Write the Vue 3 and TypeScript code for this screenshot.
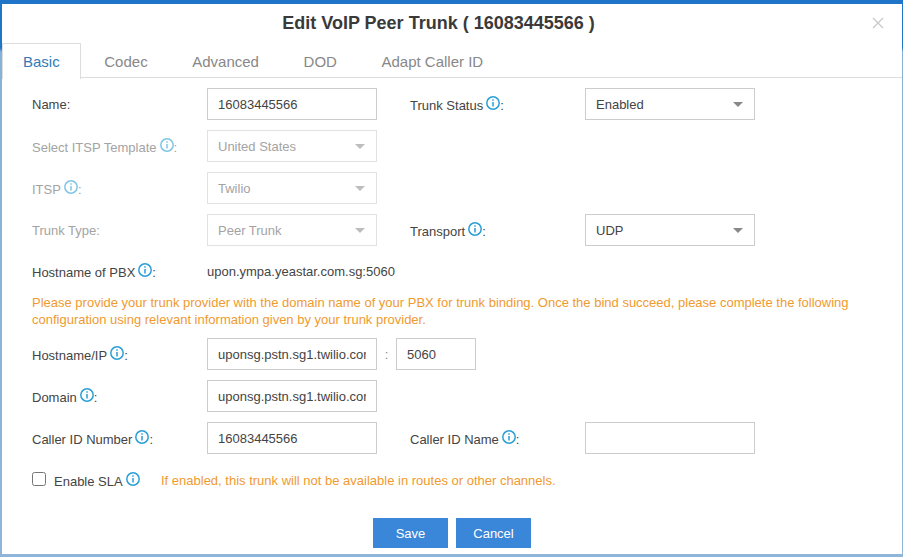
<script setup lang="ts">
const tabs = ['Basic', 'Codec', 'Advanced', 'DOD', 'Adapt Caller ID']
</script>

<template>
  <div class="backdrop">
    <div class="modal">
      <header class="modal-head">
        <h1>Edit VoIP Peer Trunk ( 16083445566 )</h1>
        <svg class="close" width="12" height="12" viewBox="0 0 12 12">
          <path d="M1 1l10 10M11 1L1 11" stroke="#c8c8c8" stroke-width="1.3" fill="none" />
        </svg>
      </header>

      <nav class="tabs">
        <a v-for="(tab, i) in tabs" :key="tab" class="tab" :class="{ active: i === 0 }">{{ tab }}</a>
      </nav>

      <form class="form" @submit.prevent>
        <div class="row">
          <label class="label">Name:</label>
          <input class="field" value="16083445566" />
          <label class="label right">Trunk Status<svg class="info" viewBox="0 0 14 14"><circle cx="7" cy="7" r="6.2" /><path d="M7 6v4.6M7 3.2v1.6" /></svg>:</label>
          <div class="field select">Enabled<i class="arrow" /></div>
        </div>

        <div class="row muted">
          <label class="label">Select ITSP Template<svg class="info" viewBox="0 0 14 14"><circle cx="7" cy="7" r="6.2" /><path d="M7 6v4.6M7 3.2v1.6" /></svg>:</label>
          <div class="field select">United States<i class="arrow" /></div>
        </div>

        <div class="row muted">
          <label class="label">ITSP<svg class="info" viewBox="0 0 14 14"><circle cx="7" cy="7" r="6.2" /><path d="M7 6v4.6M7 3.2v1.6" /></svg>:</label>
          <div class="field select">Twilio<i class="arrow" /></div>
        </div>

        <div class="row">
          <label class="label muted">Trunk Type:</label>
          <div class="field select muted">Peer Trunk<i class="arrow" /></div>
          <label class="label right">Transport<svg class="info" viewBox="0 0 14 14"><circle cx="7" cy="7" r="6.2" /><path d="M7 6v4.6M7 3.2v1.6" /></svg>:</label>
          <div class="field select">UDP<i class="arrow" /></div>
        </div>

        <div class="row static">
          <label class="label">Hostname of PBX<svg class="info" viewBox="0 0 14 14"><circle cx="7" cy="7" r="6.2" /><path d="M7 6v4.6M7 3.2v1.6" /></svg>:</label>
          <span class="plain">upon.ympa.yeastar.com.sg:5060</span>
        </div>

        <p class="warning notice">Please provide your trunk provider with the domain name of your PBX for trunk binding. Once the bind succeed, please complete the following configuration using relevant information given by your trunk provider.</p>

        <div class="row">
          <label class="label">Hostname/IP<svg class="info" viewBox="0 0 14 14"><circle cx="7" cy="7" r="6.2" /><path d="M7 6v4.6M7 3.2v1.6" /></svg>:</label>
          <input class="field" value="uponsg.pstn.sg1.twilio.com" />
          <span class="colon">:</span>
          <input class="field port" value="5060" />
        </div>

        <div class="row">
          <label class="label">Domain<svg class="info" viewBox="0 0 14 14"><circle cx="7" cy="7" r="6.2" /><path d="M7 6v4.6M7 3.2v1.6" /></svg>:</label>
          <input class="field" value="uponsg.pstn.sg1.twilio.com" />
        </div>

        <div class="row">
          <label class="label">Caller ID Number<svg class="info" viewBox="0 0 14 14"><circle cx="7" cy="7" r="6.2" /><path d="M7 6v4.6M7 3.2v1.6" /></svg>:</label>
          <input class="field" value="16083445566" />
          <label class="label right">Caller ID Name<svg class="info" viewBox="0 0 14 14"><circle cx="7" cy="7" r="6.2" /><path d="M7 6v4.6M7 3.2v1.6" /></svg>:</label>
          <input class="field" value="" />
        </div>

        <div class="sla">
          <span class="check" />
          <span class="sla-label">Enable SLA<svg class="info" viewBox="0 0 14 14"><circle cx="7" cy="7" r="6.2" /><path d="M7 6v4.6M7 3.2v1.6" /></svg></span>
          <span class="warning">If enabled, this trunk will not be available in routes or other channels.</span>
        </div>

        <div class="actions">
          <button type="button">Save</button>
          <button type="button">Cancel</button>
        </div>
      </form>
    </div>
  </div>
</template>

<style scoped>
.backdrop {
  width: 903px;
  height: 557px;
  box-sizing: border-box;
  padding: 4px 1px 3px 2px;
  background: linear-gradient(#1f76c8 0, #1f76c8 48px, #86b1d8 52px, #8fb6da 100%);
  font-family: "Liberation Sans", Arial, sans-serif;
  font-size: 13px;
  color: #444;
  overflow: hidden;
}

.modal {
  height: 550px;
  background: #fff;
}

.modal-head {
  position: relative;
  height: 39px;
  display: flex;
  align-items: center;
  justify-content: center;
  padding-right: 27px;
}

.modal-head h1 {
  margin: 0;
  font-size: 18px;
  font-weight: 700;
  color: #3a3a3a;
}

.close {
  position: absolute;
  top: 13px;
  right: 18px;
}

.tabs {
  display: flex;
  height: 34px;
  border-bottom: 1px solid #ddd;
}

.tab {
  padding: 0 20.3px;
  margin-right: 2px;
  line-height: 35px;
  font-size: 15px;
  color: #888;
  border: 1px solid transparent;
  border-bottom: none;
}

.tab.active {
  height: 35px;
  padding-left: 20px;
  color: #337ab7;
  background: #fff;
  border-color: #ddd;
}

.form {
  padding: 10px 0 0 30px;
}

.row {
  display: flex;
  align-items: center;
  height: 32px;
  margin-bottom: 10px;
}

.label {
  width: 175px;
  flex: none;
  white-space: nowrap;
  padding-top: 1px;
}

.label.right {
  margin-left: 33px;
}

.muted,
.muted .label {
  color: #a3a3a3;
}

.muted .info {
  opacity: 0.6;
}

.field {
  width: 170px;
  height: 32px;
  flex: none;
  box-sizing: border-box;
  padding: 0 10px;
  border: 1px solid #ccc;
  background: #fff;
  font: inherit;
  color: #444;
  outline: none;
}

.select {
  display: flex;
  align-items: center;
  justify-content: space-between;
}

.muted .field,
.field.muted {
  border-color: #e2e2e2;
  color: #a3a3a3;
}

.arrow {
  width: 0;
  height: 0;
  margin-right: 1px;
  border-left: 5.5px solid transparent;
  border-right: 5.5px solid transparent;
  border-top: 5.5px solid #888;
}

.muted .arrow {
  border-top-color: #bdbdbd;
}

.port {
  width: 80px;
}

.colon {
  width: 19px;
  flex: none;
  text-align: center;
  color: #888;
}

.static {
  height: 24px;
  margin-bottom: 0;
  margin-top: 13px;
}

.notice {
  width: 840px;
  margin: 11px 0 10px;
  line-height: 17px;
}

.warning {
  color: #ef9a2f;
}

.sla {
  display: flex;
  align-items: center;
  height: 24px;
  margin-top: 14px;
}

.check {
  width: 14px;
  height: 14px;
  flex: none;
  box-sizing: border-box;
  border: 1px solid #767676;
  border-radius: 2.5px;
  margin-right: 8px;
  margin-top: -3px;
}

.sla-label {
  width: 107px;
  flex: none;
  white-space: nowrap;
}

.info {
  width: 14px;
  height: 14px;
  margin-left: 3px;
  vertical-align: 0;
  fill: none;
  stroke: #2a9fd6;
  stroke-width: 1.5;
}

.actions {
  display: flex;
  gap: 8px;
  justify-content: center;
  margin-top: 26px;
  padding-right: 30px;
}

.actions button {
  width: 75px;
  height: 30px;
  border: none;
  padding: 0;
  background: #3a86d8;
  color: #fff;
  font: inherit;
}
</style>

<style>
html,
body {
  margin: 0;
  background: #1f76c8;
}
</style>
